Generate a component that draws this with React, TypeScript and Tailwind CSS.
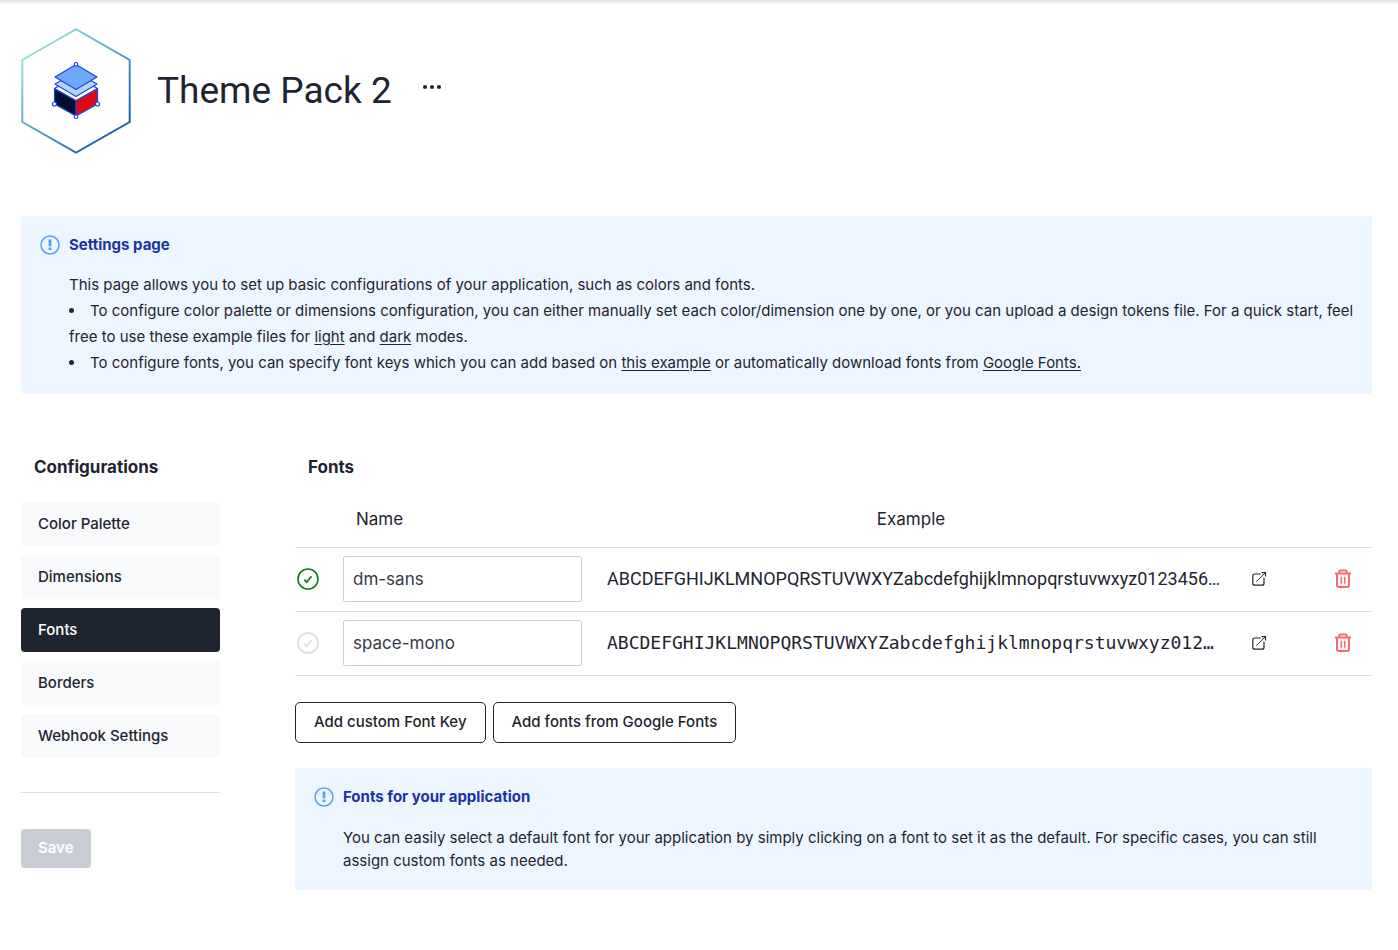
import React from "react";

type FontRow = { name: string; sample: string; isDefault: boolean; sampleClass: string };

const fonts: FontRow[] = [
  {
    name: "dm-sans",
    sample: "ABCDEFGHIJKLMNOPQRSTUVWXYZabcdefghijklmnopqrstuvwxyz0123456…",
    isDefault: true,
    sampleClass: "font-['Roboto',sans-serif]",
  },
  {
    name: "space-mono",
    sample: "ABCDEFGHIJKLMNOPQRSTUVWXYZabcdefghijklmnopqrstuvwxyz012…",
    isDefault: false,
    sampleClass: "font-['DejaVu_Sans_Mono',monospace]",
  },
];

const sections = ["Color Palette", "Dimensions", "Fonts", "Borders", "Webhook Settings"];

function PackLogo() {
  return (
    <svg width="110" height="126" viewBox="0 0 110 126" fill="none" aria-hidden="true" className="shrink-0">
      <defs>
        <linearGradient id="hex" x1="12" y1="22" x2="92" y2="108" gradientUnits="userSpaceOnUse">
          <stop stopColor="#9be0dc" />
          <stop offset="0.5" stopColor="#5b9fc4" />
          <stop offset="1" stopColor="#1b5fa8" />
        </linearGradient>
      </defs>
      <path d="M55 1.2 108.7 32v62L55 124.6 1.3 94V32Z" stroke="url(#hex)" strokeWidth="2" />
      <g stroke="#1f45d8" strokeWidth="1.2" strokeLinejoin="round">
        <path d="M33.5 60.5 55 72.5v15.5L33.5 76Z" fill="#020f33" />
        <path d="M76.5 60.5 55 72.5v15.5L76.5 76Z" fill="#dc0c14" />
        <path d="M33.5 60.5 55 48 76.5 60.5 55 72.5Z" fill="#fff" />
        <path d="M34 56 55 44 76 56 55 68.5Z" fill="#b3d5ff" />
        <path d="M34 49 55 36.5 76 49 55 61.5Z" fill="#6ea8fb" />
        <g fill="#fff">
          <circle cx="55" cy="36.3" r="1.8" />
          <circle cx="33.5" cy="76" r="2" />
          <circle cx="76.5" cy="76" r="2" />
          <circle cx="55" cy="88.7" r="1.8" />
        </g>
      </g>
    </svg>
  );
}

function InfoIcon() {
  return (
    <svg width="20" height="20" viewBox="0 0 20 20" fill="none" aria-hidden="true" className="shrink-0">
      <circle cx="10" cy="10" r="9" stroke="#5a9ffa" strokeWidth="1.5" />
      <path d="M8.6 4.5h2.8v6.7H8.6ZM8.6 12.6h2.8v2.5H8.6Z" fill="#5a9ffa" />
    </svg>
  );
}

function CheckCircle({ active }: { active: boolean }) {
  return (
    <svg
      width="22"
      height="22"
      viewBox="0 0 22 22"
      fill="none"
      stroke={active ? "#137a1d" : "#dcdcdc"}
      aria-hidden="true"
    >
      <circle cx="11" cy="11" r="10" strokeWidth="1.6" />
      <path d="m7.3 11.6 2.4 2.5 4.8-5.8" strokeWidth="1.8" />
    </svg>
  );
}

function OpenIcon() {
  return (
    <svg width="16" height="16" viewBox="0 0 16 16" fill="none" stroke="#1e2530" strokeWidth="1.2" aria-hidden="true">
      <path d="M9.5 3H3.8A2 2 0 0 0 1.8 5v7.2a2 2 0 0 0 2 2H11a2 2 0 0 0 2-2V6.8" />
      <path d="M5.3 10.8 14 2" strokeWidth="0.9" />
      <path d="M10.6 1.6h3.9v3.9" />
    </svg>
  );
}

function TrashIcon() {
  return (
    <svg width="18" height="20" viewBox="0 0 18 20" fill="none" stroke="#f56a6a" strokeWidth="2" aria-hidden="true">
      <path d="M1 4.6h16M5.2 4.4V3a1.4 1.4 0 0 1 1.4-1.4h4.8A1.4 1.4 0 0 1 12.8 3v1.4" />
      <path d="M3 5v11a2 2 0 0 0 2 2h8a2 2 0 0 0 2-2V5" />
      <path d="M7.3 7.8v7M10.7 7.8v7" strokeWidth="1.6" />
    </svg>
  );
}

function Notice({ title, children }: { title: string; children: React.ReactNode }) {
  return (
    <section className="rounded bg-[#edf5ff] py-[18px] pr-3 pl-[19px] text-[15px]">
      <h3 className="flex items-center gap-[9px] leading-[22px] font-bold text-[#1a34a0]">
        <InfoIcon />
        {title}
      </h3>
      <div className="mt-4 pl-[29px]">{children}</div>
    </section>
  );
}

function TextLink({ children }: { children: React.ReactNode }) {
  return (
    <a href="#" className="underline underline-offset-2">
      {children}
    </a>
  );
}

export default function App() {
  return (
    <div className="bg-white font-['Inter',sans-serif] text-[#1e2530]">
      <div className="h-1 bg-linear-to-b from-[#dcdcdc] to-white" />
      <main className="pt-6 pr-[26px] pb-14 pl-[21px]">
        <header className="flex items-center">
          <PackLogo />
          <h1 className="ml-[26px] font-['Roboto',sans-serif] text-[37px] leading-10">Theme Pack 2</h1>
          <button type="button" aria-label="More options" className="ml-[30px] pb-2">
            <svg width="20" height="6" viewBox="0 0 20 6" fill="#1e2530" aria-hidden="true">
              <circle cx="3" cy="3" r="2" />
              <circle cx="10" cy="3" r="2" />
              <circle cx="17" cy="3" r="2" />
            </svg>
          </button>
        </header>

        <div className="mt-[62px]">
          <Notice title="Settings page">
            <div className="leading-[26px]">
              <p>This page allows you to set up basic configurations of your application, such as colors and fonts.</p>
              <ul className="list-inside list-disc">
                <li>
                  To configure color palette or dimensions configuration, you can either manually set each
                  color/dimension one by one, or you can upload a design tokens file. For a quick start, feel free to
                  use these example files for <TextLink>light</TextLink> and <TextLink>dark</TextLink> modes.
                </li>
                <li>
                  To configure fonts, you can specify font keys which you can add based on{" "}
                  <TextLink>this example</TextLink> or automatically download fonts from{" "}
                  <TextLink>Google Fonts.</TextLink>
                </li>
              </ul>
            </div>
          </Notice>
        </div>

        <div className="mt-[61px] flex items-start gap-[75px]">
          <aside className="w-[199px] shrink-0">
            <h2 className="pl-[13px] text-[17px] leading-6 font-bold">Configurations</h2>
            <nav className="mt-[23px] flex flex-col gap-[9px] border-b border-[#dddfe4] pb-[34px]">
              {sections.map((s) => (
                <button
                  key={s}
                  type="button"
                  className={
                    s === "Fonts"
                      ? "h-11 rounded bg-[#1e2530] px-[17px] text-left text-[15px] font-medium text-white"
                      : "h-11 rounded bg-[#f8f9fb] px-[17px] text-left text-[15px] font-medium"
                  }
                >
                  {s}
                </button>
              ))}
            </nav>
            <button
              type="button"
              disabled
              className="mt-9 h-[39px] rounded bg-[#cacdd5] px-[17px] text-[15px] font-semibold text-white"
            >
              Save
            </button>
          </aside>

          <section className="min-w-0 flex-1">
            <h2 className="pl-[13px] text-[17px] leading-6 font-bold">Fonts</h2>
            <table className="mt-[13px] w-full table-fixed border-collapse text-[17px]">
              <colgroup>
                <col className="w-12" />
                <col className="w-[239px]" />
                <col />
                <col className="w-[52px]" />
                <col className="w-20" />
              </colgroup>
              <thead>
                <tr className="h-[55px] border-b border-[#dddfe4]">
                  <td />
                  <th scope="col" className="pl-[13px] text-left font-normal">
                    Name
                  </th>
                  <th scope="col" className="text-center font-normal">
                    Example
                  </th>
                  <td />
                  <td />
                </tr>
              </thead>
              <tbody>
                {fonts.map((f) => (
                  <tr key={f.name} className="h-16 border-b border-[#dddfe4]">
                    <td className="pl-[2px]">
                      <button
                        type="button"
                        aria-label={`Set ${f.name} as default`}
                        aria-pressed={f.isDefault}
                        className="block"
                      >
                        <CheckCircle active={f.isDefault} />
                      </button>
                    </td>
                    <td>
                      <input
                        type="text"
                        aria-label="Font name"
                        defaultValue={f.name}
                        className="block h-[46px] w-full rounded-xs border border-[#c9ccd4] bg-white px-[9px] text-[#323b49]"
                      />
                    </td>
                    <td className="pl-[25px]">
                      <div className={`truncate text-[18px] leading-7 ${f.sampleClass}`}>{f.sample}</div>
                    </td>
                    <td className="pl-[11px]">
                      <a href="#" aria-label={`Open ${f.name}`} className="block w-4">
                        <OpenIcon />
                      </a>
                    </td>
                    <td>
                      <button type="button" aria-label={`Delete ${f.name}`} className="mr-5 ml-auto block">
                        <TrashIcon />
                      </button>
                    </td>
                  </tr>
                ))}
              </tbody>
            </table>

            <div className="mt-[26px] flex flex-wrap gap-[7px]">
              <button
                type="button"
                className="h-[41px] rounded-[5px] border border-[#1e2530] px-[18px] text-[15px] font-medium"
              >
                Add custom Font Key
              </button>
              <button
                type="button"
                className="h-[41px] rounded-[5px] border border-[#1e2530] px-[18px] text-[15px] font-medium"
              >
                Add fonts from Google Fonts
              </button>
            </div>

            <div className="mt-[25px]">
              <Notice title="Fonts for your application">
                <p className="pt-[2px] leading-[23px]">
                  You can easily select a default font for your application by simply clicking on a font to set it as
                  the default. For specific cases, you can still assign custom fonts as needed.
                </p>
              </Notice>
            </div>
          </section>
        </div>
      </main>
    </div>
  );
}
